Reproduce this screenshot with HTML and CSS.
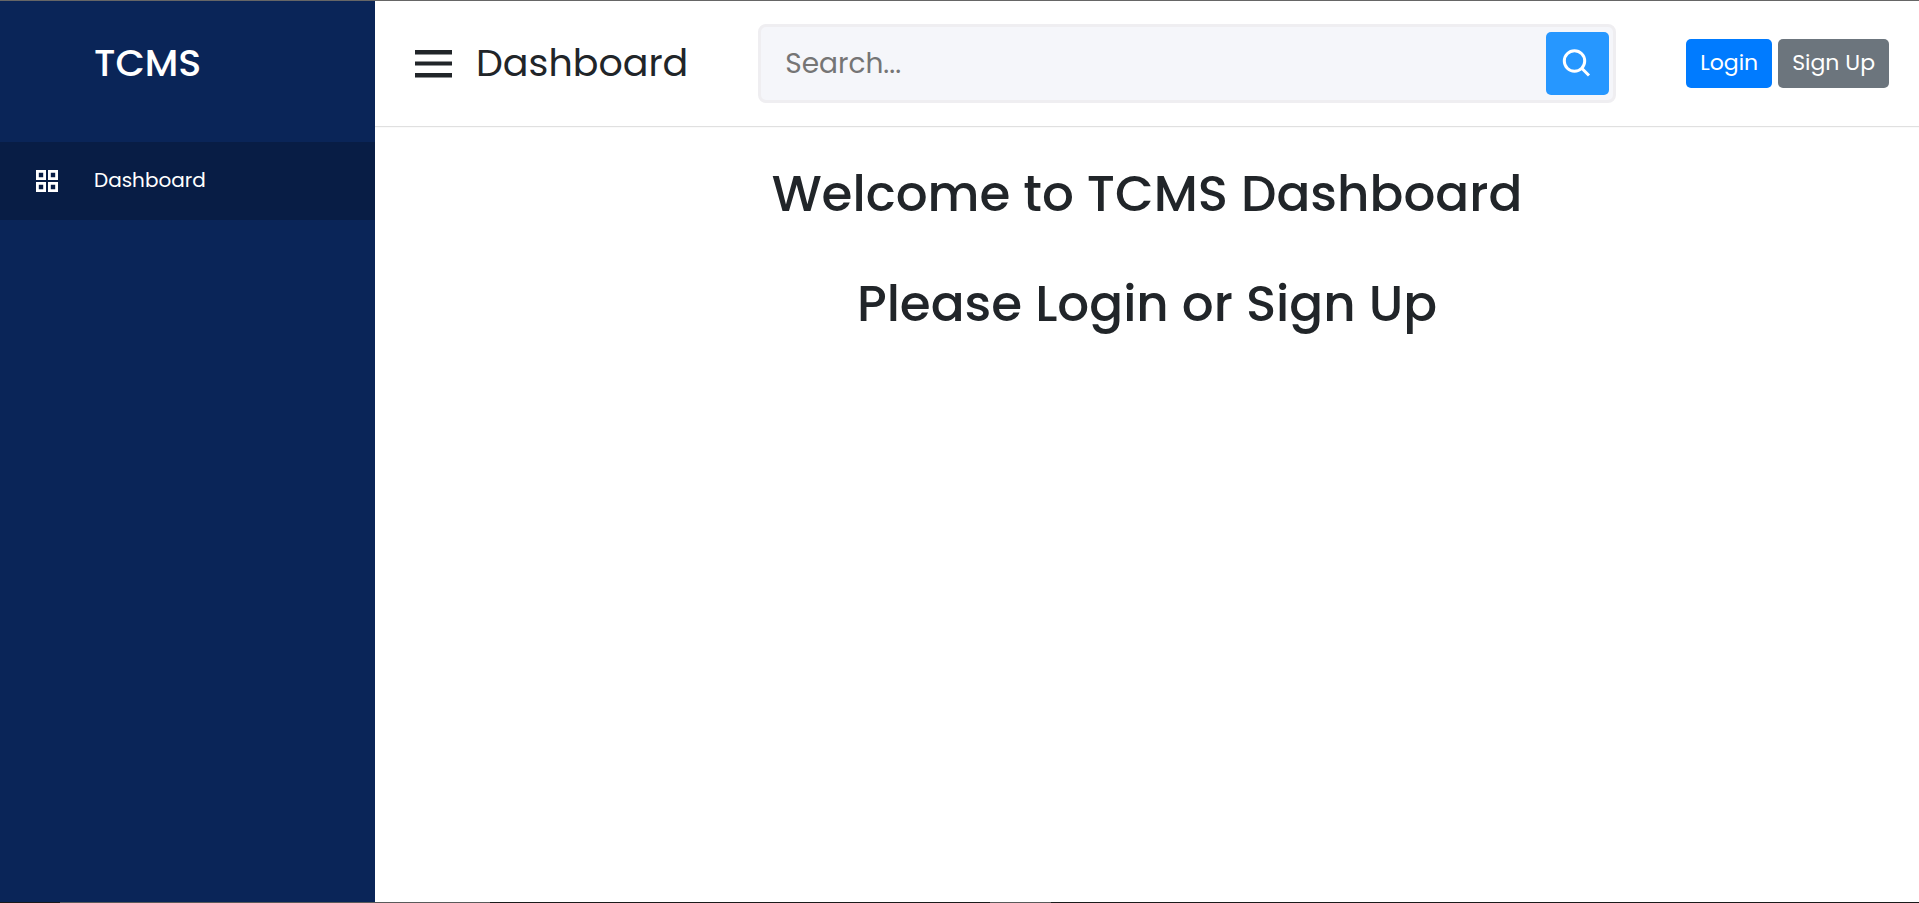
FILE: index.html
```html
<!DOCTYPE html>
<html lang="en">
<head>
<meta charset="utf-8">
<meta name="viewport" content="width=device-width, initial-scale=1">
<title>TCMS Dashboard</title>
<link rel="stylesheet" href="styles.css">
</head>
<body>
<div class="app">
  <aside class="sidebar">
    <div class="brand">TCMS</div>
    <nav>
      <a class="nav-link active" href="#">
        <svg class="nav-icon" viewBox="0 0 30 30" aria-hidden="true"><path fill="none" stroke="currentColor" stroke-width="2.800" d="M5.400 5.400h7.200v7.200h-7.200zM17.400 5.400h7.200v7.200h-7.200zM5.400 17.400h7.200v7.200h-7.200zM17.400 17.400h7.200v7.200h-7.200z"/></svg>
        <span>Dashboard</span>
      </a>
    </nav>
  </aside>
  <div class="home">
    <header class="topbar">
      <div class="page-title">
        <button class="menu-button" type="button" aria-label="Toggle menu">
          <svg viewBox="0 0 38 28" aria-hidden="true"><path fill="currentColor" d="M0 0h37v4.500H0zM0 11.500h37v4H0zM0 23h37v4.500H0z"/></svg>
        </button>
        <span>Dashboard</span>
      </div>
      <form class="search">
        <input class="search-input" type="text" placeholder="Search..." aria-label="Search">
        <button class="search-button" type="button" aria-label="Search">
          <svg viewBox="0 0 34 34" aria-hidden="true"><g fill="none" stroke="currentColor" stroke-width="3"><circle cx="13.500" cy="14" r="10.200"/><path d="M20.500 21l7.500 7.500"/></g></svg>
        </button>
      </form>
      <div class="actions">
        <button class="btn btn-primary" type="button">Login</button>
        <button class="btn btn-secondary" type="button">Sign Up</button>
      </div>
    </header>
    <main class="content">
      <h1>Welcome to TCMS Dashboard</h1>
      <h1>Please Login or Sign Up</h1>
    </main>
  </div>
</div>
<div class="taskbar-edge"></div>
</body>
</html>
```
FILE: styles.css
```css
* {
  box-sizing: border-box;
  margin: 0;
  padding: 0;
}

body {
  display: flex;
  flex-direction: column;
  min-height: 100vh;
  border-top: 1px solid #666;
  background: #fff;
  color: #212529;
  font-family: Poppins, Inter, "Liberation Sans", sans-serif;
  font-size: 20px;
}

button,
input {
  font: inherit;
}

button {
  border: 0;
  cursor: pointer;
}

svg {
  display: block;
}

.app {
  display: flex;
  flex: 1;
}

.sidebar {
  flex: 0 0 375px;
  background: #0a2558;
  color: #fff;
}

.brand {
  display: flex;
  align-items: center;
  height: 125px;
  padding: 0 0 2px 94px;
  font-size: 38px;
  font-weight: 500;
}

.nav-link {
  display: flex;
  align-items: center;
  height: 78px;
  margin-top: 16px;
  color: #fff;
  font-size: 20px;
  text-decoration: none;
}

.nav-link span {
  padding-bottom: 2px;
}

.nav-link.active {
  background: #081d45;
}

.nav-icon {
  width: 30px;
  height: 30px;
  margin: 0 32px;
}

.home {
  flex: 1;
  min-width: 0;
}

.topbar {
  display: flex;
  align-items: center;
  gap: 70px;
  height: 125px;
  padding: 0 30px 0 40px;
  box-shadow: 0 1px 1px rgba(0, 0, 0, 0.12);
}

.page-title {
  display: flex;
  align-items: center;
  gap: 23px;
  font-size: 38px;
  font-weight: 400;
}

.page-title span {
  padding-bottom: 2px;
}

.menu-button {
  width: 38px;
  background: none;
  color: inherit;
}

.search {
  display: flex;
  flex: 1;
  align-items: center;
  height: 79px;
  padding-right: 4px;
  border: 3px solid #efeef1;
  border-radius: 8px;
  background: #f5f6fa;
}

.search-input {
  flex: 1;
  min-width: 0;
  height: 100%;
  padding: 0 24px;
  border: 0;
  outline: 0;
  background: transparent;
  font-size: 28px;
}

.search-input::placeholder {
  color: #757575;
}

.search-button {
  display: flex;
  align-items: center;
  justify-content: center;
  width: 63px;
  height: 63px;
  border-radius: 5px;
  background: #2697ff;
  color: #fff;
}

.search-button svg {
  width: 34px;
  height: 34px;
}

.actions {
  display: flex;
  gap: 6px;
}

.btn {
  height: 49px;
  padding: 0 14px 2px;
  border-radius: 5px;
  color: #fff;
  font-size: 22px;
}

.btn-primary {
  background: #007bff;
}

.btn-secondary {
  background: #6c757d;
}

.content {
  display: flex;
  flex-direction: column;
  gap: 50px;
  padding: 38px 20px;
  text-align: center;
}

.content h1 {
  font-size: 50px;
  font-weight: 500;
  line-height: 60px;
}

.taskbar-edge {
  height: 1px;
  background: linear-gradient(90deg, #1a1a1a 60px, #5a5a5a 60px 490px, #1a1a1a 490px 990px, #5a5a5a 990px 1051px, #1a1a1a 1051px);
}
```
